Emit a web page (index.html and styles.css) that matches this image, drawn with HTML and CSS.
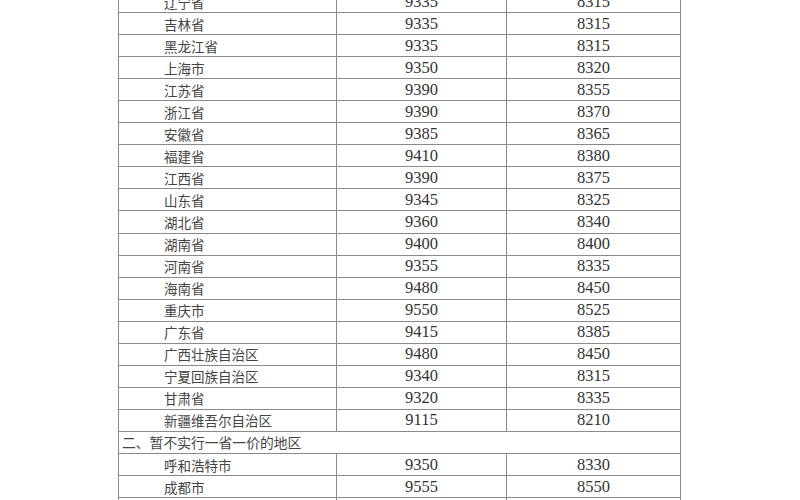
FILE: index.html
```html
<!DOCTYPE html>
<html lang="zh">
<head>
<meta charset="utf-8">
<link rel="stylesheet" href="styles.css">
</head>
<body>
<div class="page">
<table class="price">
<colgroup><col class="c1"><col class="c2"><col class="c3"></colgroup>
<tbody>
<tr><td class="name">辽宁省</td><td class="num">9335</td><td class="num">8315</td></tr>
<tr><td class="name">吉林省</td><td class="num">9335</td><td class="num">8315</td></tr>
<tr><td class="name">黑龙江省</td><td class="num">9335</td><td class="num">8315</td></tr>
<tr><td class="name">上海市</td><td class="num">9350</td><td class="num">8320</td></tr>
<tr><td class="name">江苏省</td><td class="num">9390</td><td class="num">8355</td></tr>
<tr><td class="name">浙江省</td><td class="num">9390</td><td class="num">8370</td></tr>
<tr><td class="name">安徽省</td><td class="num">9385</td><td class="num">8365</td></tr>
<tr><td class="name">福建省</td><td class="num">9410</td><td class="num">8380</td></tr>
<tr><td class="name">江西省</td><td class="num">9390</td><td class="num">8375</td></tr>
<tr><td class="name">山东省</td><td class="num">9345</td><td class="num">8325</td></tr>
<tr><td class="name">湖北省</td><td class="num">9360</td><td class="num">8340</td></tr>
<tr><td class="name">湖南省</td><td class="num">9400</td><td class="num">8400</td></tr>
<tr><td class="name">河南省</td><td class="num">9355</td><td class="num">8335</td></tr>
<tr><td class="name">海南省</td><td class="num">9480</td><td class="num">8450</td></tr>
<tr><td class="name">重庆市</td><td class="num">9550</td><td class="num">8525</td></tr>
<tr><td class="name">广东省</td><td class="num">9415</td><td class="num">8385</td></tr>
<tr><td class="name">广西壮族自治区</td><td class="num">9480</td><td class="num">8450</td></tr>
<tr><td class="name">宁夏回族自治区</td><td class="num">9340</td><td class="num">8315</td></tr>
<tr><td class="name">甘肃省</td><td class="num">9320</td><td class="num">8335</td></tr>
<tr><td class="name">新疆维吾尔自治区</td><td class="num">9115</td><td class="num">8210</td></tr>
<tr><td class="section" colspan="3">二、暂不实行一省一价的地区</td></tr>
<tr><td class="name">呼和浩特市</td><td class="num">9350</td><td class="num">8330</td></tr>
<tr><td class="name">成都市</td><td class="num">9555</td><td class="num">8550</td></tr>
<tr><td class="name">昆明市</td><td class="num">9535</td><td class="num">8525</td></tr>
</tbody>
</table>
</div>
</body>
</html>
```
FILE: styles.css
```css
html, body {
  margin: 0;
  padding: 0;
  background: #ffffff;
}
.page {
  width: 800px;
  height: 500px;
  overflow: hidden;
  padding-left: 118px;
  box-sizing: border-box;
}
.price {
  border-collapse: collapse;
  table-layout: fixed;
  width: 562px;
  margin-top: -10px;
  color: #3a3a3a;
}
.c1 { width: 218px; }
.c2 { width: 170px; }
.c3 { width: 174px; }
.price td {
  border: 1.5px solid #8a8a8a;
  height: 21.05px;
  padding: 0;
  line-height: 20px;
  white-space: nowrap;
  overflow: hidden;
}
.name {
  font-family: "Noto Sans CJK SC", sans-serif;
  font-size: 13.5px;
  padding-left: 45px !important;
  color: #444;
}
.num {
  font-family: "Liberation Serif", serif;
  font-size: 16.5px;
  text-align: center;
  color: #333;
}
.section {
  font-family: "Noto Sans CJK SC", sans-serif;
  font-size: 13.8px;
  padding-left: 3px !important;
  color: #444;
}
```
